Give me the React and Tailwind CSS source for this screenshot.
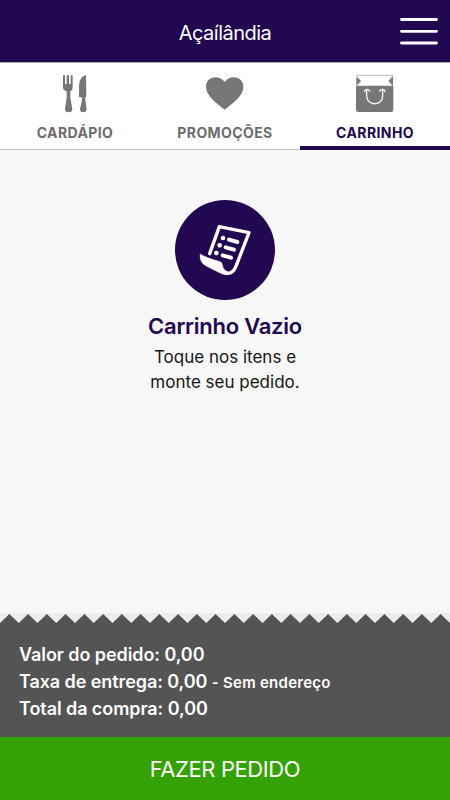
const teeth = Array.from({ length: 24 }, (_, i) => `L${i * 18.75 + 9.375} 0 L${(i + 1) * 18.75} 9`).join(' ');

function CutleryIcon() {
  return (
    <svg className="h-[50px] w-[50px]" viewBox="0 0 150 150" fill="#777">
      <path d="M39 24q0-3 3-3t3 3v22q0 3 2.500 3t2.500-3V24q0-3 3.500-3t3.500 3v22q0 3 2.500 3t2.500-3V24q0-3 3-3t3 3v35q0 8-7 11v19l6 34q0 10-11 10t-11-10l5-34V70q-10-3-11-11z" />
      <path d="M108 23q0-2-3-1Q88 29 87 53v32q0 3 3 3h6v8l-6 27q0 10 10 10t10-10l-4-27v-8q3-1 3-4z" />
    </svg>
  );
}

function HeartIcon() {
  return (
    <svg className="h-[50px] w-[50px]" viewBox="0 0 150 150" fill="#777">
      <path d="M74 125C55 109 18 86 18 56c0-16 12-28 28-28 12 0 22 5 28 14 6-9 16-14 28-14 16 0 28 12 28 28 0 30-37 53-56 69z" />
    </svg>
  );
}

function BagIcon() {
  return (
    <svg className="h-[50px] w-[50px]" viewBox="0 0 150 150">
      <path d="M18 53h112v72q0 7-7 7H25q-7 0-7-7z" fill="#777" />
      <path d="M19 22h110l-13 18 12 13M19 22l14 18-13 13" fill="none" stroke="#aaa" strokeWidth="2.500" />
      <path d="M19 26v27l13-14zM129 26v27l-13-14z" fill="#777" />
      <path d="M43 71q1-7 8-7t8 6M89 70q1-6 8-6t8 7M50 66v18c0 31 48 31 48 0V66" fill="none" stroke="#f4f4f4" strokeWidth="4" strokeLinecap="round" />
    </svg>
  );
}

function ReceiptIcon() {
  return (
    <svg className="h-[100px] w-[100px]" viewBox="15 15 300 300" fill="none" stroke="#fff" strokeLinecap="round" strokeLinejoin="round">
      <circle cx="165" cy="165" r="150" fill="#220850" stroke="none" />
      <path d="M119 176L148 95l89 18-38 98c-6 17-16 25-29 24" strokeWidth="10" />
      <path d="M91 177Q105 187 151 200q6 2 6 9 2 15 15 20l2 11q-10 1-24-6l-42-21Q88 202 90 180z" fill="#fff" stroke="#fff" strokeWidth="1" />
      <path d="M177 134l25 7M167 157l25 7M158 181l25 7" strokeWidth="12" />
      <path d="M159 129h.1M149 151h.1M139 174h.1" strokeWidth="14" />
    </svg>
  );
}

function Tab({ icon, label, active }) {
  return (
    <button className={`flex h-[87px] flex-1 flex-col items-center pt-[5px] ${active ? 'border-b-4 border-[#220850] text-[#220850]' : 'border-b border-[#c4c4c4] text-[#6c6c6c]'}`}>
      {icon}
      <span className="mt-[5px] text-[14px] leading-5 font-bold tracking-[0.4px]">{label}</span>
    </button>
  );
}

export default function App() {
  return (
    <div className="flex h-[800px] w-[450px] flex-col overflow-hidden bg-[#f7f7f7] font-['Inter','Liberation_Sans',sans-serif]">
      <header className="grid h-[63px] shrink-0 grid-cols-[1fr_auto_1fr] items-center border-b border-[#aaa] bg-[#220850] pt-1 text-white">
        <h1 className="col-start-2 text-[20px] leading-6 tracking-[-0.5px]">Açaílândia</h1>
        <button className="mr-3 mb-1 justify-self-end" aria-label="Menu">
          <svg className="h-[28px] w-[38px]" viewBox="0 0 38 28" stroke="#fff" strokeWidth="2.800" strokeLinecap="round">
            <path d="M1.500 2.500h35M1.500 14.300h35M1.500 26h35" />
          </svg>
        </button>
      </header>
      <nav className="flex shrink-0 bg-white">
        <Tab icon={<CutleryIcon />} label="CARDÁPIO" />
        <Tab icon={<HeartIcon />} label="PROMOÇÕES" />
        <Tab icon={<BagIcon />} label="CARRINHO" active />
      </nav>
      <main className="flex flex-1 flex-col items-center pt-[50px] text-center">
        <ReceiptIcon />
        <h2 className="mt-3 text-[22px] leading-7 font-semibold tracking-[-0.25px] text-[#220850]">Carrinho Vazio</h2>
        <p className="mt-[5px] text-[17px] leading-[25px] text-[#161616]">Toque nos itens e<br />monte seu pedido.</p>
      </main>
      <svg className="h-[10px] w-full shrink-0 bg-[#ebecf1]" viewBox="0 -1 450 10">
        <path d={`M0 9 ${teeth} Z`} fill="#545454" />
      </svg>
      <section className="h-[114px] shrink-0 bg-[#545454] pt-[18px] pl-[19px] text-[18px] leading-[27px] font-semibold tracking-[-0.08px] text-white">
        <p>Valor do pedido: 0,00</p>
        <p>Taxa de entrega: 0,00 <span className="text-[15px] leading-none tracking-[0.25px]">- Sem endereço</span></p>
        <p>Total da compra: 0,00</p>
      </section>
      <button className="h-[63px] shrink-0 bg-[#33a202] pt-[2px] text-[22px] tracking-[-0.4px] text-white">FAZER PEDIDO</button>
    </div>
  );
}
